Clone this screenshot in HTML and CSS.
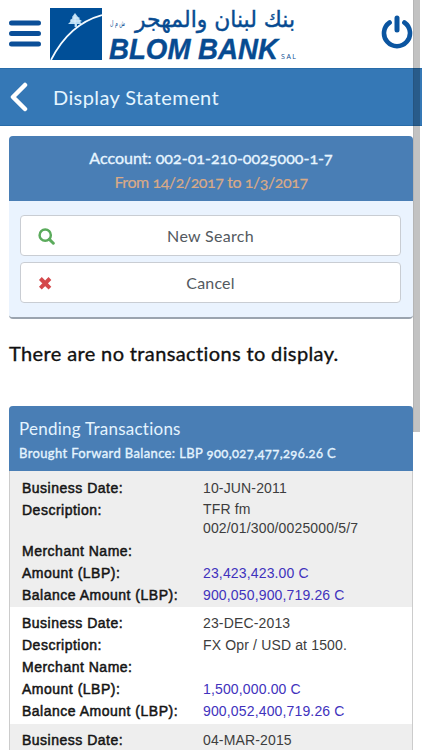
FILE: index.html
```
<!DOCTYPE html>
<html lang="en">
<head>
<meta charset="utf-8">
<meta name="viewport" content="width=device-width, initial-scale=1">
<title>Display Statement</title>
<link rel="stylesheet" href="styles.css">
</head>
<body>
<header class="top">
  <svg class="menu" viewBox="0 0 32 28"><path d="M2.500 3H29.500M2.500 13.500H29.500M2.500 24H29.500"/></svg>
  <svg class="emblem" viewBox="0 0 52 52">
    <rect width="52" height="52" fill="#004f98"/>
    <path d="M1 52Q19 16 52 7" fill="none" stroke="#f5fbff" stroke-width="1.8"/>
    <path d="M25 5l3 4 2 1-1 1 3 2-2 1 3 2-6 0v3h-2v-3l-7 0 3-3-1-1 3-2-1-1z" fill="#b9dcf3"/>
    <path d="M22 10h6M20 13h10M25 7v12" stroke="#e8f5ff" stroke-width=".7"/>
  </svg>
  <svg class="wordmark" viewBox="0 0 192 60">
    <text class="arabic" x="187" y="23" textLength="160" lengthAdjust="spacingAndGlyphs" direction="rtl">بنك لبنان والمهجر</text>
    <text class="arabic-small" x="17" y="22" textLength="15" lengthAdjust="spacingAndGlyphs" direction="rtl">ش م ل</text>
    <text class="latin" x="1" y="55" textLength="169" lengthAdjust="spacingAndGlyphs">BLOM BANK</text>
    <text class="sal" x="173" y="55" textLength="15">SAL</text>
  </svg>
  <svg class="power" viewBox="0 0 32 34"><path d="M8.600 7.500A13 13 0 1 0 23.400 7.500" stroke-width="4.600"/><path d="M16 3V15" stroke-width="5"/></svg>
</header>
<nav class="titlebar">
  <svg class="back" viewBox="0 0 18 30"><path d="M15 3L3 15L15 27"/></svg>
  <h1>Display Statement</h1>
</nav>
<main>
  <section class="account">
    <div class="account-head">
      <div class="number">Account: 002-01-210-0025000-1-7</div>
      <div class="period">From 14/2/2017 to 1/3/2017</div>
    </div>
    <div class="actions">
      <button><svg viewBox="0 0 16 16"><circle cx="7.300" cy="7.300" r="5" fill="none" stroke="#5bab5c" stroke-width="2.200"/><path d="M11 11l3.500 3.500" stroke="#5bab5c" stroke-width="2.600" stroke-linecap="round"/></svg><span class="search">New Search</span></button>
      <button><svg viewBox="0 0 16 16"><path d="M3 4l8.500 8.500M11.500 4l-8.500 8.500" stroke="#d4494c" stroke-width="3.500"/></svg><span class="cancel">Cancel</span></button>
    </div>
  </section>
  <p class="empty">There are no transactions to display.</p>
  <section class="pending">
    <div class="pending-head">
      <h2>Pending Transactions</h2>
      <div class="forward">Brought Forward Balance: LBP 900,027,477,296.26 C</div>
    </div>
    <dl class="entry first">
      <dt>Business Date:</dt><dd>10-JUN-2011</dd>
      <dt>Description:</dt><dd>TFR fm<br>002/01/300/0025000/5/7</dd>
      <dt>Merchant Name:</dt><dd></dd>
      <dt>Amount (LBP):</dt><dd class="money">23,423,423.00 C</dd>
      <dt>Balance Amount (LBP):</dt><dd class="money">900,050,900,719.26 C</dd>
    </dl>
    <dl class="entry">
      <dt>Business Date:</dt><dd>23-DEC-2013</dd>
      <dt>Description:</dt><dd>FX Opr / USD at 1500.</dd>
      <dt>Merchant Name:</dt><dd></dd>
      <dt>Amount (LBP):</dt><dd class="money">1,500,000.00 C</dd>
      <dt>Balance Amount (LBP):</dt><dd class="money">900,052,400,719.26 C</dd>
    </dl>
    <dl class="entry">
      <dt>Business Date:</dt><dd>04-MAR-2015</dd>
    </dl>
  </section>
</main>
<div class="scroll"></div>
</body>
</html>
```

FILE: styles.css
```
* { box-sizing: border-box; }
html, body { height: 100%; overflow: hidden; }
body { margin: 0; background: #fff; font-family: Lato, "Open Sans", sans-serif; font-feature-settings: "onum", "liga" 0; white-space: nowrap; }
h1, h2, p, dl, dd { margin: 0; font-weight: 400; }
.top { height: 68px; display: flex; align-items: flex-start; padding: 0 9px 0 8px; }
.menu { width: 32px; height: 28px; margin: 20px 10px 0 1px; }
.menu path { fill: none; stroke: #0b4f98; stroke-width: 5; stroke-linecap: round; }
.emblem { width: 52px; height: 52px; margin: 8px 6px 0 -1px; flex: none; }
.wordmark { width: 192px; height: 60px; margin-top: 4px; overflow: visible; flex: none; }
.wordmark text { fill: #074b91; }
.arabic { font: 23px "DejaVu Sans", sans-serif; stroke: #074b91; stroke-width: .4; }
.arabic-small { font: 8px "DejaVu Sans", sans-serif; }
.latin { font: italic 700 29px "Liberation Sans", sans-serif; stroke: #074b91; stroke-width: .4; }
.sal { font: 7px "Open Sans", sans-serif; }
.power { width: 32px; height: 34px; margin: 15px 0 0 auto; }
.power path { fill: none; stroke: #0b55a0; stroke-linecap: round; }
.titlebar { height: 58px; background: #3578b6; color: #e4f5ff; display: flex; align-items: center; padding: 0 0 1px 10px; border-top: 1px solid #286ca9; border-bottom: 1px solid #286ca9; }
.back { width: 18px; height: 30px; margin-right: 25px; }
.back path { fill: none; stroke: #fff; stroke-width: 4.5; stroke-linecap: round; stroke-linejoin: round; }
h1 { font-size: 20px; letter-spacing: .4px; }
main { padding: 10px 9px 0; }
.account { width: 404px; height: 183px; border-radius: 4px; background: #eaf3fe; border-bottom: 2px solid #9ba4af; overflow: hidden; }
.account-head { height: 65px; background: #497eb5; padding-top: 11px; text-align: center; font-size: 16px; line-height: 23px; color: #e7f5ff; }
.number { -webkit-text-stroke: .35px; letter-spacing: .02px; position: relative; top: -1px; }
.period { letter-spacing: -.43px; color: #d9aa87; -webkit-text-stroke: .2px; }
.actions { display: grid; gap: 6px; padding: 14px 12px 0 11px; }
button { height: 41px; border: 1px solid #c9cdd3; border-radius: 4px; background: #fff; padding: 0 16px; display: grid; grid-template-columns: 18px 1fr 18px; align-items: center; font: 16px Lato, sans-serif; color: #535960; }
button svg { width: 18px; height: 18px; }
.search { letter-spacing: .3px; }
.cancel { letter-spacing: .2px; }
.empty { font-size: 20px; line-height: 26px; margin-top: 21px; letter-spacing: .37px; color: #111; -webkit-text-stroke: .35px #111; }
.pending { margin-top: 40px; width: 404px; border: 1px solid #ccc; border-top: 0; border-radius: 4px 4px 0 0; }
.pending-head { height: 65px; margin: 0 -1px; background: #497eb5; border-radius: 4px 4px 0 0; padding: 11px 10px 0; color: #e4f4ff; }
h2 { font-size: 17px; line-height: 24px; letter-spacing: .25px; }
.forward { font-size: 13px; line-height: 25px; -webkit-text-stroke: .35px; letter-spacing: .37px; }
.entry { display: grid; grid-template-columns: 181px 1fr; align-content: start; padding: 5px 12px 2px; font: 14px/22px "Liberation Sans", sans-serif; color: #3d3d3d; }
.entry:nth-of-type(odd) { background: #eee; }
.first { padding-top: 6px; padding-bottom: 1px; }
.first dd:nth-of-type(2) { line-height: 19px; padding-top: 1px; height: 41px; }
dt { color: #151515; -webkit-text-stroke: .5px #151515; letter-spacing: .5px; }
dd { letter-spacing: .15px; min-height: 22px; }
.money { color: #4132bd; }
.scroll { position: absolute; left: 413px; top: 0; width: 7px; height: 432px; background: rgba(0,0,0,.24); border-left: 1px solid #0001; }
```
